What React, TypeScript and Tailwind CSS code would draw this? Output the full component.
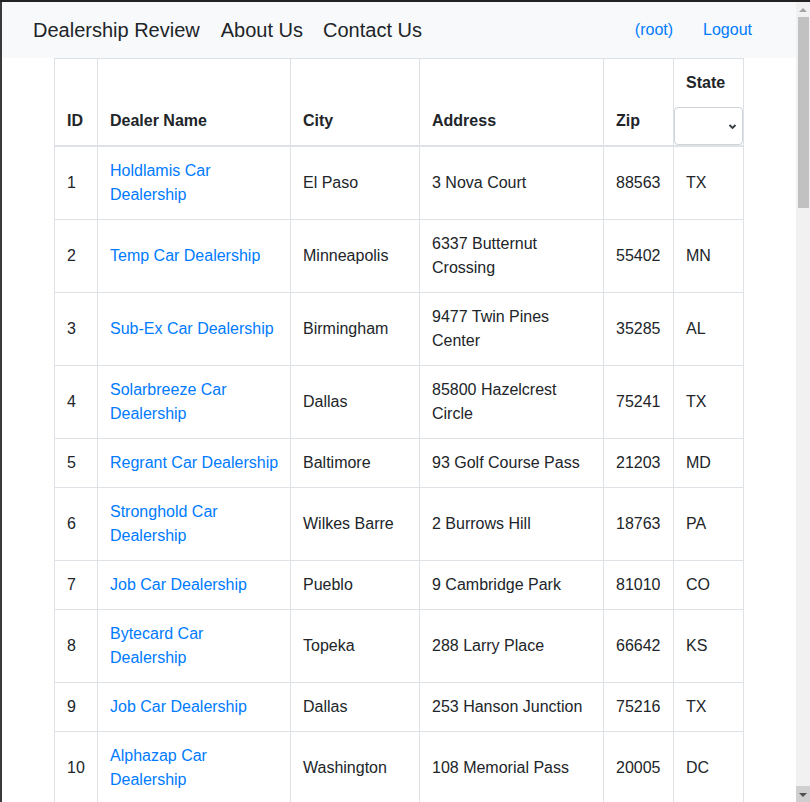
import React from 'react';

type Dealer = {
  id: number;
  name: string[];
  city: string;
  address: string[];
  zip: string;
  st: string;
};

const DEALERS: Dealer[] = [
  { id: 1, name: ['Holdlamis Car', 'Dealership'], city: 'El Paso', address: ['3 Nova Court'], zip: '88563', st: 'TX' },
  { id: 2, name: ['Temp Car Dealership'], city: 'Minneapolis', address: ['6337 Butternut', 'Crossing'], zip: '55402', st: 'MN' },
  { id: 3, name: ['Sub-Ex Car Dealership'], city: 'Birmingham', address: ['9477 Twin Pines', 'Center'], zip: '35285', st: 'AL' },
  { id: 4, name: ['Solarbreeze Car', 'Dealership'], city: 'Dallas', address: ['85800 Hazelcrest', 'Circle'], zip: '75241', st: 'TX' },
  { id: 5, name: ['Regrant Car Dealership'], city: 'Baltimore', address: ['93 Golf Course Pass'], zip: '21203', st: 'MD' },
  { id: 6, name: ['Stronghold Car', 'Dealership'], city: 'Wilkes Barre', address: ['2 Burrows Hill'], zip: '18763', st: 'PA' },
  { id: 7, name: ['Job Car Dealership'], city: 'Pueblo', address: ['9 Cambridge Park'], zip: '81010', st: 'CO' },
  { id: 8, name: ['Bytecard Car', 'Dealership'], city: 'Topeka', address: ['288 Larry Place'], zip: '66642', st: 'KS' },
  { id: 9, name: ['Job Car Dealership'], city: 'Dallas', address: ['253 Hanson Junction'], zip: '75216', st: 'TX' },
  { id: 10, name: ['Alphazap Car', 'Dealership'], city: 'Washington', address: ['108 Memorial Pass'], zip: '20005', st: 'DC' },
];

const cols = 'grid grid-cols-[43px_193px_129px_184px_70px_70px]';
const cell = 'flex items-center p-3 border-r border-b border-[#dee2e6] whitespace-nowrap';
const head = 'flex items-end px-3 pb-3 border-r border-b-2 border-[#dee2e6] font-bold';

const Lines = ({ lines }: { lines: string[] }) => (
  <div className="flex flex-col">
    {lines.map((l) => (
      <span key={l}>{l}</span>
    ))}
  </div>
);

const Navbar = () => (
  <nav className="h-[56px] shrink-0 bg-[#f8f9fa] flex items-center justify-between pl-[31px] pr-[44px]">
    <div className="flex items-center text-[20px] leading-[30px] text-[#212529]">
      <span>Dealership Review</span>
      <span className="ml-[21px]">About Us</span>
      <span className="ml-5">Contact Us</span>
    </div>
    <div className="flex items-center text-[16px] text-[#007bff]">
      <span>(root)</span>
      <span className="ml-[30px]">Logout</span>
    </div>
  </nav>
);

const Scrollbar = () => (
  <div className="w-[14px] shrink-0 bg-[#f1f1f1] flex flex-col">
    <div className="h-[15px] flex justify-center pt-[6px]">
      <div className="w-0 h-0 border-x-[4px] border-x-transparent border-b-[4px] border-b-[#a3a3a3]" />
    </div>
    <div className="h-[191px] w-[11px] ml-[2px] bg-[#c1c1c1]" />
    <div className="flex-1" />
    <div className="h-[16px] bg-[#cfcfcf] flex justify-center pt-[7px]">
      <div className="w-0 h-0 border-x-[4px] border-x-transparent border-t-[4px] border-t-[#505050]" />
    </div>
  </div>
);

export default function App() {
  return (
    <div className="h-[802px] w-[810px] overflow-hidden bg-[#222222] pt-[2px] flex flex-col font-['Liberation_Sans',Arial,sans-serif] text-[16px] leading-6 text-[#212529]">
      <div className="flex flex-1 min-h-0 pl-[2px] bg-[#3a3a3a]">
        <div className="flex-1 min-w-0 bg-white overflow-hidden flex flex-col">
          <Navbar />
          <div className="w-[690px] mx-auto border-l border-t border-[#dee2e6]">
            <div className={cols}>
              <div className={head}>ID</div>
              <div className={head}>Dealer Name</div>
              <div className={head}>City</div>
              <div className={head}>Address</div>
              <div className={head}>Zip</div>
              <div className="flex flex-col border-r border-b-2 border-[#dee2e6] font-bold">
                <span className="px-3 pt-[12px]">State</span>
                <div className="mt-[12px] h-[38px] w-[69px] border border-[#ced4da] rounded-[4px] bg-white flex items-center justify-end pr-[5px]">
                  <svg width="9" height="7" viewBox="0 0 9 7">
                    <path d="M1.5 2 L4.5 5 L7.5 2" fill="none" stroke="#343a40" strokeWidth="1.8" />
                  </svg>
                </div>
              </div>
            </div>
            {DEALERS.map((d) => (
              <div key={d.id} className={cols}>
                <div className={cell}>{d.id}</div>
                <div className={`${cell} text-[#007bff]`}>
                  <Lines lines={d.name} />
                </div>
                <div className={cell}>{d.city}</div>
                <div className={cell}>
                  <Lines lines={d.address} />
                </div>
                <div className={cell}>{d.zip}</div>
                <div className={cell}>{d.st}</div>
              </div>
            ))}
          </div>
        </div>
        <Scrollbar />
      </div>
    </div>
  );
}
